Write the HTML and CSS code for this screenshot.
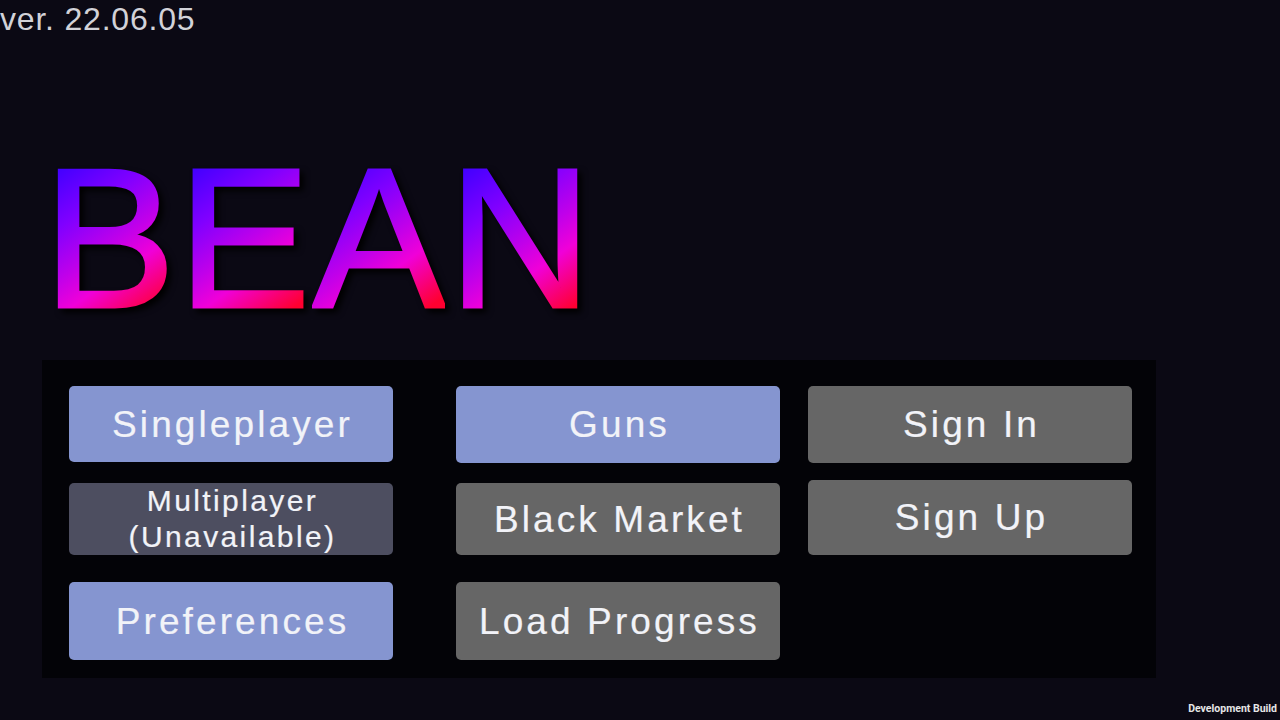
FILE: index.html
```html
<!DOCTYPE html>
<html lang="en">
<head>
<meta charset="utf-8">
<title>BEAN</title>
<link rel="stylesheet" href="styles.css">
</head>
<body>
<main class="screen">
  <div class="version">ver. 22.06.05</div>
  <h1 class="logo"><span class="l l-b">B</span><span class="l l-e">E</span><span class="l l-a">A</span><span class="l l-n">N</span></h1>
  <section class="panel">
    <div class="col">
      <button class="btn blue h76">Singleplayer</button>
      <button class="btn dim h72 two m21">Multiplayer<br>(Unavailable)</button>
      <button class="btn blue h78 m27">Preferences</button>
    </div>
    <div class="col">
      <button class="btn blue h77">Guns</button>
      <button class="btn grey h72 m20">Black Market</button>
      <button class="btn grey h78 m27">Load Progress</button>
    </div>
    <div class="col">
      <button class="btn grey h77">Sign In</button>
      <button class="btn grey h75 m17">Sign Up</button>
    </div>
  </section>
  <div class="build">Development Build</div>
</main>
</body>
</html>
```
FILE: styles.css
```css
* { box-sizing: border-box; }
html, body { margin: 0; height: 100%; }
body { background: #0b0914; overflow: hidden; font-family: "Liberation Sans", Arial, sans-serif; }
.screen { position: relative; width: 1280px; height: 720px; padding-left: 42px; display: flex; flex-direction: column; }
.version { position: absolute; left: 0; top: 1px; font-size: 32px; line-height: 37px; letter-spacing: 0.8px; color: #d2d2d8; }
.logo { margin: 121px 0 0; height: 239px; font-size: 199px; line-height: 234px; font-weight: 400; display: flex; filter: drop-shadow(4px 4px 3px #000); }
.l { display: block; height: 234px; color: transparent; -webkit-text-stroke: 3px transparent; -webkit-background-clip: text; background-clip: text; background-image: linear-gradient(145deg, #3c00ff 16%, #8000ff 36%, #c000ea 52%, #f000d8 63%, #ff0030 82%); }
.l-b { margin-left: 1px; }
.l-e { margin-left: 2px; }
.l-a { margin-left: 2px; }
.l-n { margin-left: 3px; }
.panel { width: 1114px; height: 318px; background: #030307; padding: 26px 0 0 27px; display: flex; }
.col { width: 324px; display: flex; flex-direction: column; margin-right: 63px; }
.col:nth-child(2) { margin-right: 28px; }
.btn { display: block; width: 324px; border: 0; padding: 1px 0 0 3px; border-radius: 5px; font-family: inherit; font-kerning: none; color: #f2f3f8; font-size: 37px; letter-spacing: 3.1px; text-align: center; -webkit-text-stroke: 0.2px #f2f3f8; }
.two { font-size: 30px; line-height: 36px; letter-spacing: 2.4px; padding-top: 0; }
.blue { background: #8595d0; }
.grey { background: #666666; }
.dim { background: #4d4e60; }
.h72 { height: 72px; }
.h75 { height: 75px; }
.h76 { height: 76px; }
.h77 { height: 77px; }
.h78 { height: 78px; }
.m17 { margin-top: 17px; }
.m20 { margin-top: 20px; }
.m21 { margin-top: 21px; }
.m27 { margin-top: 27px; }
.build { position: absolute; right: 3px; bottom: 5px; font-family: Roboto, sans-serif; font-weight: 700; font-size: 10.5px; line-height: 13px; color: #e6e6e6; }
```
